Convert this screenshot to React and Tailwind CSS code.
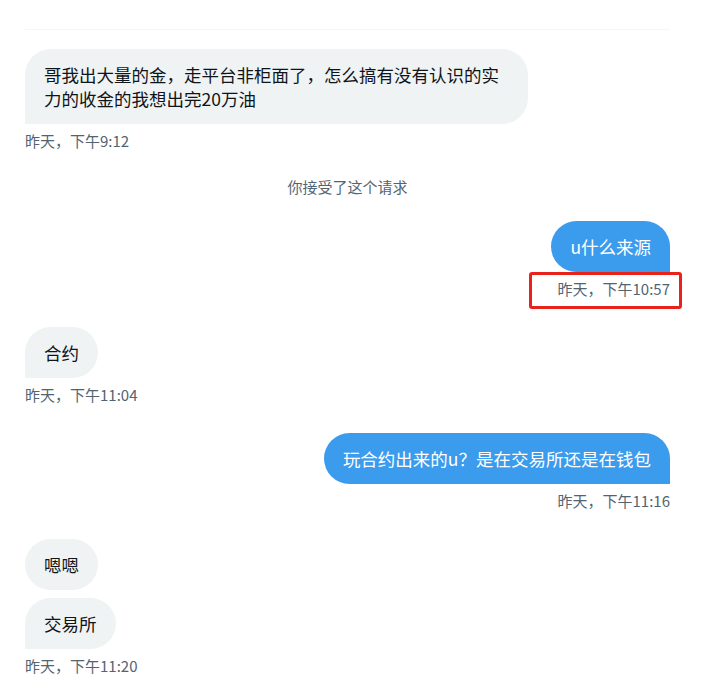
const FONT = { fontFamily: '"Noto Sans CJK SC", "Noto Sans", sans-serif' };

const Received = ({ text, square = true, className = "" }) => (
  <div className={`flex justify-start ${className}`}>
    <div
      className={`max-w-[503px] bg-[#eff3f4] text-[#0f1419] text-[17.5px] leading-[24px] px-[19px] py-[13.5px] rounded-[26px] ${
        square ? "rounded-bl-none" : ""
      }`}
    >
      {text}
    </div>
  </div>
);

const Sent = ({ text, className = "" }) => (
  <div className={`flex justify-end ${className}`}>
    <div className="bg-[#3b9bec] text-white text-[17.5px] leading-[24px] px-[19px] py-[13.5px] rounded-[26px] rounded-br-none">
      {text}
    </div>
  </div>
);

const Stamp = ({ children, right = false, boxed = false }) => (
  <div className={`relative mt-[7px] flex ${right ? "justify-end" : "justify-start"}`}>
    <span className="text-[15px] leading-[20px] text-[#536471]">{children}</span>
    {boxed && (
      <div className="absolute -top-[7px] -right-[12px] w-[153px] h-[37px] border-[3px] border-[#e8231c] rounded-[3px]" />
    )}
  </div>
);

export default function App() {
  return (
    <div className="w-[703px] h-[692px] bg-white overflow-hidden pl-[25px] pr-[33px] pt-[29px]" style={FONT}>
      <div className="h-px bg-[#f4f6f7]" />

      <div className="mt-[19px]">
        <Received text="哥我出大量的金，走平台非柜面了，怎么搞有没有认识的实力的收金的我想出完20万油" />
        <Stamp>昨天，下午9:12</Stamp>
      </div>

      <div className="mt-[26px] text-center text-[15px] leading-[20px] text-[#536471]">你接受了这个请求</div>

      <div className="mt-[24px]">
        <Sent text="u什么来源" />
        <Stamp right boxed>
          昨天，下午10:57
        </Stamp>
      </div>

      <div className="mt-[28px]">
        <Received text="合约" />
        <Stamp>昨天，下午11:04</Stamp>
      </div>

      <div className="mt-[28px]">
        <Sent text="玩合约出来的u？是在交易所还是在钱包" />
        <Stamp right>昨天，下午11:16</Stamp>
      </div>

      <div className="mt-[28px]">
        <Received text="嗯嗯" square={false} />
        <Received text="交易所" className="mt-[8px]" />
        <Stamp>昨天，下午11:20</Stamp>
      </div>
    </div>
  );
}
